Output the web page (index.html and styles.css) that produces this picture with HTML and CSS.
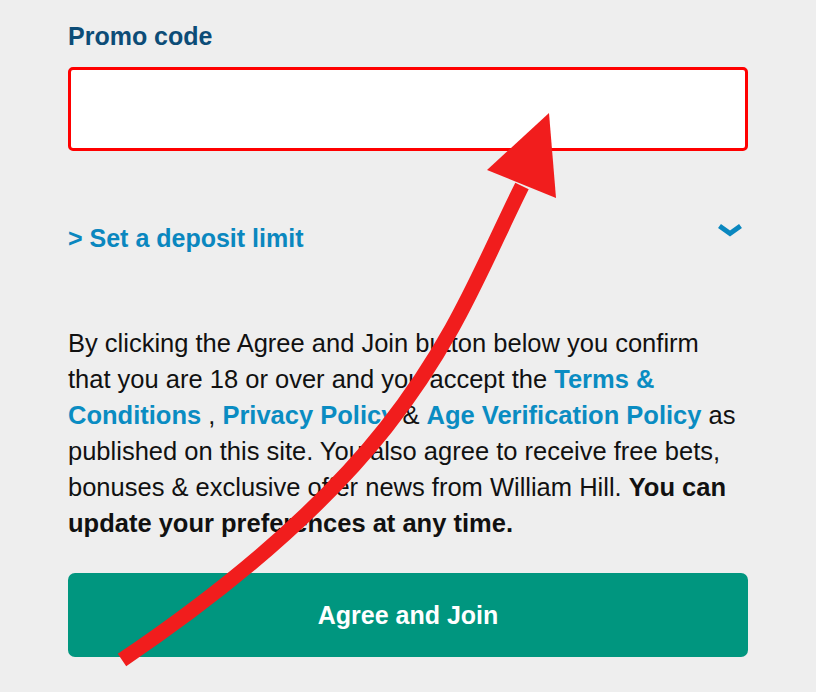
FILE: index.html
```html
<!DOCTYPE html>
<html lang="en">
<head>
    <meta charset="UTF-8">
    <meta name="viewport" content="width=device-width, initial-scale=1.0">
    <title>Join - Promo code</title>
    <link rel="stylesheet" href="styles.css">
</head>
<body>

    <!-- Registration form, last step -->
    <div class="form">
        <label class="field-label" for="promo">Promo code</label>
        <input class="promo-input" id="promo" type="text">

        <div class="deposit-row">
            <a class="deposit-link" href="#">&gt; Set a deposit limit</a>
            <svg class="chevron" width="26" height="14" viewBox="0 0 26 14">
                <polyline points="2.5,3 13,10.5 23.5,3" fill="none" stroke="#0a87bf" stroke-width="5"/>
            </svg>
        </div>

        <p class="terms">
            By clicking the Agree and Join button below you confirm that you are 18 or over and you accept the
            <a href="#">Terms &amp; Conditions</a> , <a href="#">Privacy Policy</a> &amp; <a href="#">Age Verification Policy</a>
            as published on this site. You also agree to receive free bets, bonuses &amp; exclusive offer news from William Hill.
            <b>You can update your preferences at any time.</b>
        </p>

        <button class="join-btn">Agree and Join</button>
    </div>

    <!-- Annotation arrow drawn over the screenshot -->
    <svg class="annotation" width="816" height="692" viewBox="0 0 816 692">
        <path d="M122,660 C418,460 455,320 522,186" fill="none" stroke="#f11d1d" stroke-width="15"/>
        <polygon points="549,113 487,170 556,198" fill="#f11d1d"/>
    </svg>

</body>
</html>
```

FILE: styles.css
```css
/* Page */
body {
    background-color: #eeeeee;
    margin: 0;
    padding: 0;
    font-family: "Liberation Sans", Arial, sans-serif;
    color: #111111;
}

.form {
    position: relative;
    padding: 21px 68px 0 68px;
}

/* Promo code field */
.field-label {
    display: block;
    font-size: 25px;
    font-weight: bold;
    line-height: 30px;
    color: #0c4c77;
}

.promo-input {
    display: block;
    box-sizing: border-box;
    width: 100%;
    height: 84px;
    margin-top: 16px;
    border: 3px solid #ff0000;
    border-radius: 5px;
    background-color: #ffffff;
    outline: none;
}

/* Deposit limit toggle */
.deposit-row {
    display: flex;
    justify-content: space-between;
    align-items: flex-start;
    margin-top: 72px;
    padding-right: 5px;
}

.deposit-link {
    font-size: 25px;
    font-weight: bold;
    line-height: 30px;
    color: #0a87bf;
    text-decoration: none;
}

.chevron {
    margin-top: 0;
}

/* Terms text */
.terms {
    margin: 72px 0 0 0;
    font-size: 25.5px;
    line-height: 36px;
}

.terms a {
    color: #0a8cc2;
    font-weight: bold;
    text-decoration: none;
}

/* Submit */
.join-btn {
    display: block;
    width: 100%;
    height: 84px;
    margin-top: 32px;
    border: none;
    border-radius: 7px;
    background-color: #00967f;
    color: #ffffff;
    font-family: "Liberation Sans", Arial, sans-serif;
    font-size: 25px;
    font-weight: bold;
    cursor: pointer;
}

/* Red arrow annotation */
.annotation {
    position: absolute;
    top: 0;
    left: 0;
    pointer-events: none;
}
```
